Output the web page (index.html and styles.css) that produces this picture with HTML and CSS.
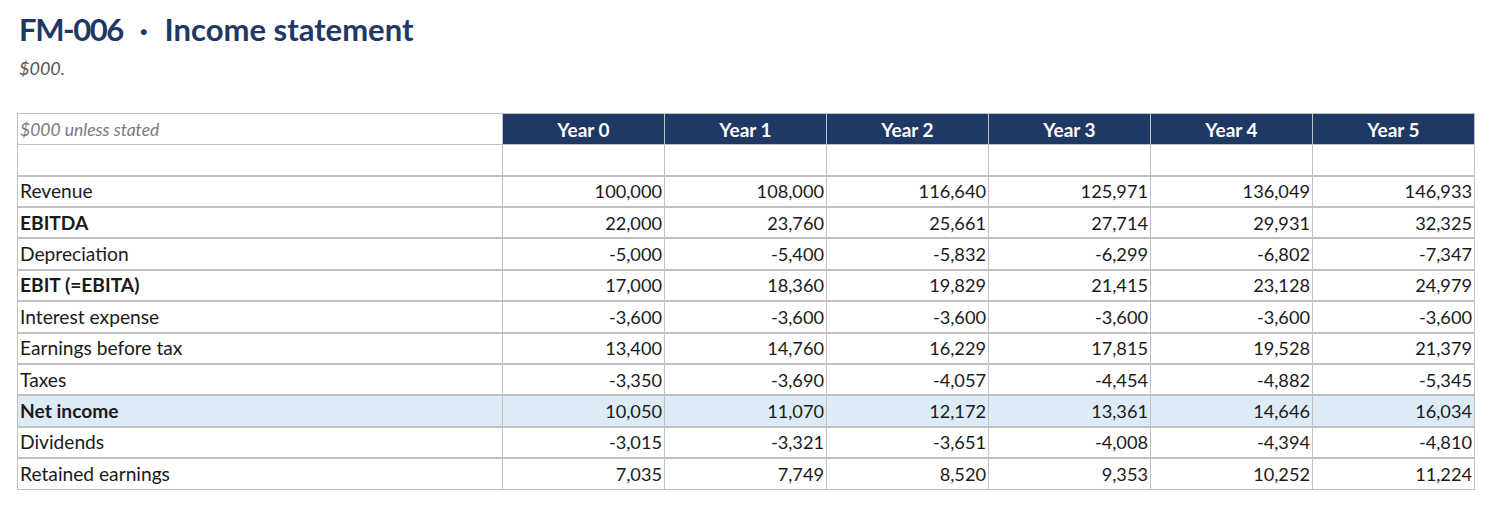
FILE: index.html
```html
<!DOCTYPE html>
<html>
<head>
<meta charset="utf-8">
<link rel="stylesheet" href="styles.css">
</head>
<body>
<div class="page">
  <h1 class="title"><span class="code">FM-006</span> <span class="dot">·</span> Income statement</h1>
  <p class="subtitle">$000.</p>
  <table class="sheet">
    <colgroup>
      <col class="c-label">
      <col class="c-year"><col class="c-year"><col class="c-year">
      <col class="c-year"><col class="c-year"><col class="c-year">
    </colgroup>
    <thead>
      <tr class="head">
        <th class="units">$000 unless stated</th>
        <th class="yr">Year 0</th><th class="yr">Year 1</th><th class="yr">Year 2</th>
        <th class="yr">Year 3</th><th class="yr">Year 4</th><th class="yr">Year 5</th>
      </tr>
    </thead>
    <tbody>
      <tr class="blank"><td></td><td></td><td></td><td></td><td></td><td></td><td></td></tr>
      <tr><td class="lbl">Revenue</td><td>100,000</td><td>108,000</td><td>116,640</td><td>125,971</td><td>136,049</td><td>146,933</td></tr>
      <tr class="bold"><td class="lbl">EBITDA</td><td>22,000</td><td>23,760</td><td>25,661</td><td>27,714</td><td>29,931</td><td>32,325</td></tr>
      <tr><td class="lbl">Depreciation</td><td>-5,000</td><td>-5,400</td><td>-5,832</td><td>-6,299</td><td>-6,802</td><td>-7,347</td></tr>
      <tr class="bold"><td class="lbl">EBIT (=EBITA)</td><td>17,000</td><td>18,360</td><td>19,829</td><td>21,415</td><td>23,128</td><td>24,979</td></tr>
      <tr><td class="lbl">Interest expense</td><td>-3,600</td><td>-3,600</td><td>-3,600</td><td>-3,600</td><td>-3,600</td><td>-3,600</td></tr>
      <tr><td class="lbl">Earnings before tax</td><td>13,400</td><td>14,760</td><td>16,229</td><td>17,815</td><td>19,528</td><td>21,379</td></tr>
      <tr><td class="lbl">Taxes</td><td>-3,350</td><td>-3,690</td><td>-4,057</td><td>-4,454</td><td>-4,882</td><td>-5,345</td></tr>
      <tr class="highlight"><td class="lbl">Net income</td><td>10,050</td><td>11,070</td><td>12,172</td><td>13,361</td><td>14,646</td><td>16,034</td></tr>
      <tr><td class="lbl">Dividends</td><td>-3,015</td><td>-3,321</td><td>-3,651</td><td>-4,008</td><td>-4,394</td><td>-4,810</td></tr>
      <tr><td class="lbl">Retained earnings</td><td>7,035</td><td>7,749</td><td>8,520</td><td>9,353</td><td>10,252</td><td>11,224</td></tr>
    </tbody>
  </table>
</div>
</body>
</html>
```

FILE: styles.css
```css
html, body {
  margin: 0;
  padding: 0;
  background: #ffffff;
}

body {
  font-family: Lato, "Noto Sans", "Liberation Sans", sans-serif;
  color: #1a1a1a;
}

.page {
  padding: 9px 17px 16px 17px;
}

.title {
  margin: 0 0 0 2px;
  font-size: 31px;
  line-height: 40px;
  font-weight: 700;
  color: #1f3864;
}

.title .code {
  letter-spacing: -1.4px;
}

.title .dot {
  margin: 0 9px;
}

.subtitle {
  margin: 8px 0 0 2px;
  font-size: 18px;
  line-height: 22px;
  font-style: italic;
  color: #555555;
}

.sheet {
  margin-top: 34px;
  width: 100%;
  border-collapse: collapse;
  table-layout: fixed;
  font-size: 18.2px;
}

.c-label { width: 485px; }
.c-year { width: 162px; }

.sheet th,
.sheet td {
  border: 1px solid #c0c0c0;
  padding: 0 2px;
  white-space: nowrap;
  overflow: hidden;
}

.head th {
  height: 30px;
}

.units {
  text-align: left;
  font-weight: 400;
  font-style: italic;
  font-size: 17.5px;
  color: #7a7a7a;
}

.yr {
  background: #203864;
  color: #ffffff;
  font-weight: 700;
  font-size: 19px;
  text-align: center;
}

.sheet tbody td {
  height: 29.4px;
  text-align: right;
  border-top-width: 2px;
  line-height: 20px;
  vertical-align: middle;
}

.sheet tbody tr.blank td {
  border-top-width: 1px;
  height: 29.6px;
}

.sheet tbody td.lbl {
  text-align: left;
  font-size: 19.2px;
}

.bold td.lbl,
.highlight td.lbl {
  font-weight: 700;
}

.highlight td {
  background: #ddebf7;
}
```
